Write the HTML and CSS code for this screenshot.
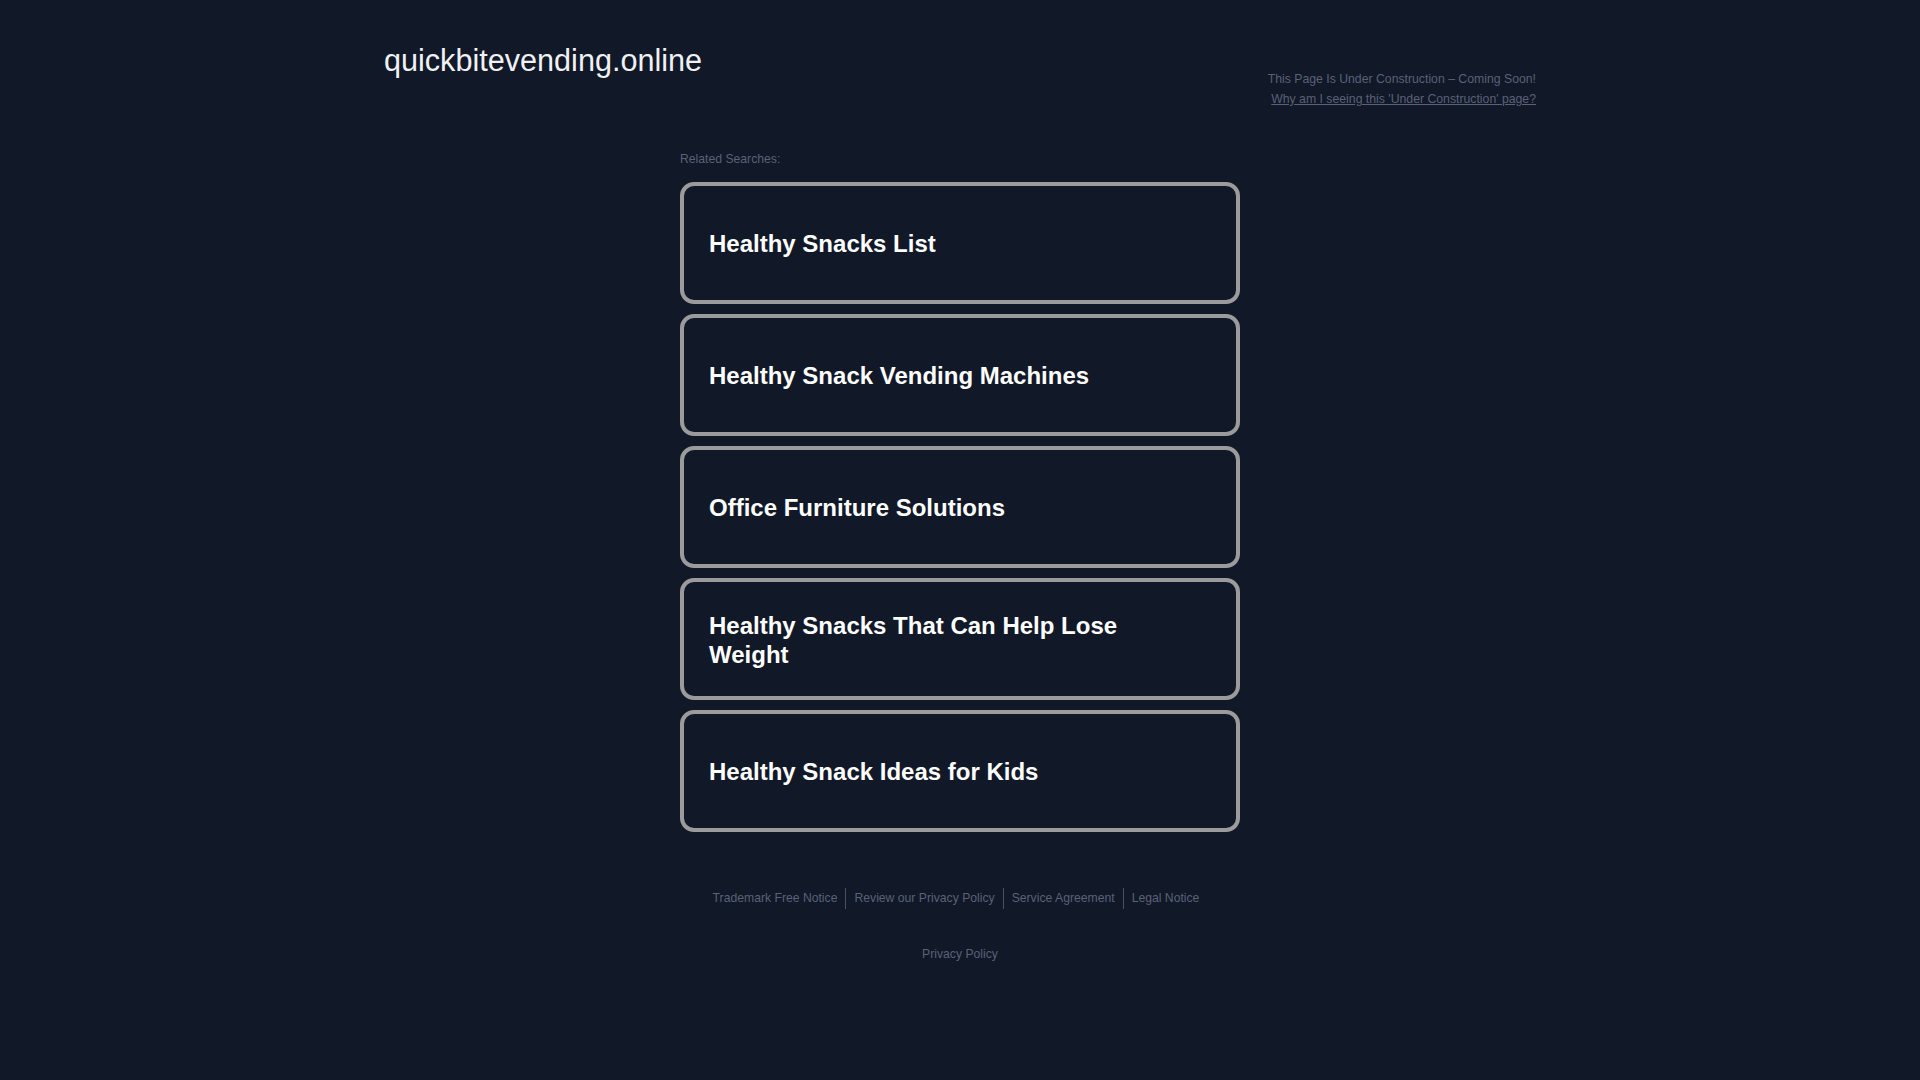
FILE: index.html
```html
<!DOCTYPE html>
<html lang="en">
<head>
<meta charset="UTF-8" />
<meta name="viewport" content="width=device-width, initial-scale=1" />
<title>quickbitevending.online</title>
<link rel="stylesheet" href="styles.css">
</head>
<body>
<div class="page">
  <header class="header">
    <h1 class="domain">quickbitevending.online</h1>
    <div class="notice">
      <p class="notice-title">This Page Is Under Construction &ndash; Coming Soon!</p>
      <a class="notice-link" href="#">Why am I seeing this 'Under Construction' page?</a>
    </div>
  </header>

  <main class="searches" aria-label="Related Searches">
    <div class="searches-label">Related Searches:</div>
    <a class="search-card" href="#"><span>Healthy Snacks List</span></a>
    <a class="search-card" href="#"><span>Healthy Snack Vending Machines</span></a>
    <a class="search-card" href="#"><span>Office Furniture Solutions</span></a>
    <a class="search-card" href="#"><span>Healthy Snacks That Can Help Lose Weight</span></a>
    <a class="search-card" href="#"><span>Healthy Snack Ideas for Kids</span></a>
  </main>

  <footer class="footer">
    <nav class="footer-links">
      <a href="#">Trademark Free Notice</a>
      <a href="#">Review our Privacy Policy</a>
      <a href="#">Service Agreement</a>
      <a href="#">Legal Notice</a>
    </nav>
    <div class="footer-privacy">
      <a href="#">Privacy Policy</a>
    </div>
  </footer>
</div>
</body>
</html>
```

FILE: styles.css
```css
/* Base */
* {
  box-sizing: border-box;
}
body {
  margin: 0;
  background: #111827;
  font-family: 'Liberation Sans', Arial, Helvetica, sans-serif;
  color: #fff;
  min-height: 100vh;
}
a {
  text-decoration: none;
}

/* Header */
.header {
  width: 1152px;
  margin: 0 auto;
  padding-top: 42px;
  display: flex;
  justify-content: space-between;
  align-items: flex-start;
}
.domain {
  margin: 0;
  font-size: 30.6px;
  line-height: 36px;
  font-weight: 400;
  color: #f0f1f3;
}
.notice {
  margin-top: 27px;
  text-align: right;
  font-size: 12.25px;
  line-height: 20px;
  color: #5a6178;
}
.notice-title {
  margin: 0;
}
.notice-link {
  color: #5a6178;
  text-decoration: underline;
}

/* Related searches */
.searches {
  width: 560px;
  margin: 40px auto 0;
  display: flex;
  flex-direction: column;
  gap: 10px;
}
.searches-label {
  font-size: 12.2px;
  line-height: 20px;
  color: #5a6178;
  margin-bottom: 3px;
}
.search-card {
  display: flex;
  align-items: center;
  height: 122px;
  padding: 3px 50px 0 25px;
  border: 4px solid #9b9b9b;
  border-radius: 14px;
  color: #fff;
  font-size: 24px;
  font-weight: 700;
  line-height: 1.2;
}
.search-card:hover span {
  text-decoration: underline;
}

/* Footer */
.footer {
  margin-top: 56px;
  text-align: center;
  font-size: 12.2px;
  line-height: 21px;
}
.footer a {
  color: #5a6178;
}
.footer-links {
  display: flex;
  justify-content: center;
  padding-right: 8px;
}
.footer-links a {
  padding: 0 8px;
}
.footer-links a + a {
  border-left: 1px solid #4a5064;
}
.footer-privacy {
  margin-top: 35px;
}
```
